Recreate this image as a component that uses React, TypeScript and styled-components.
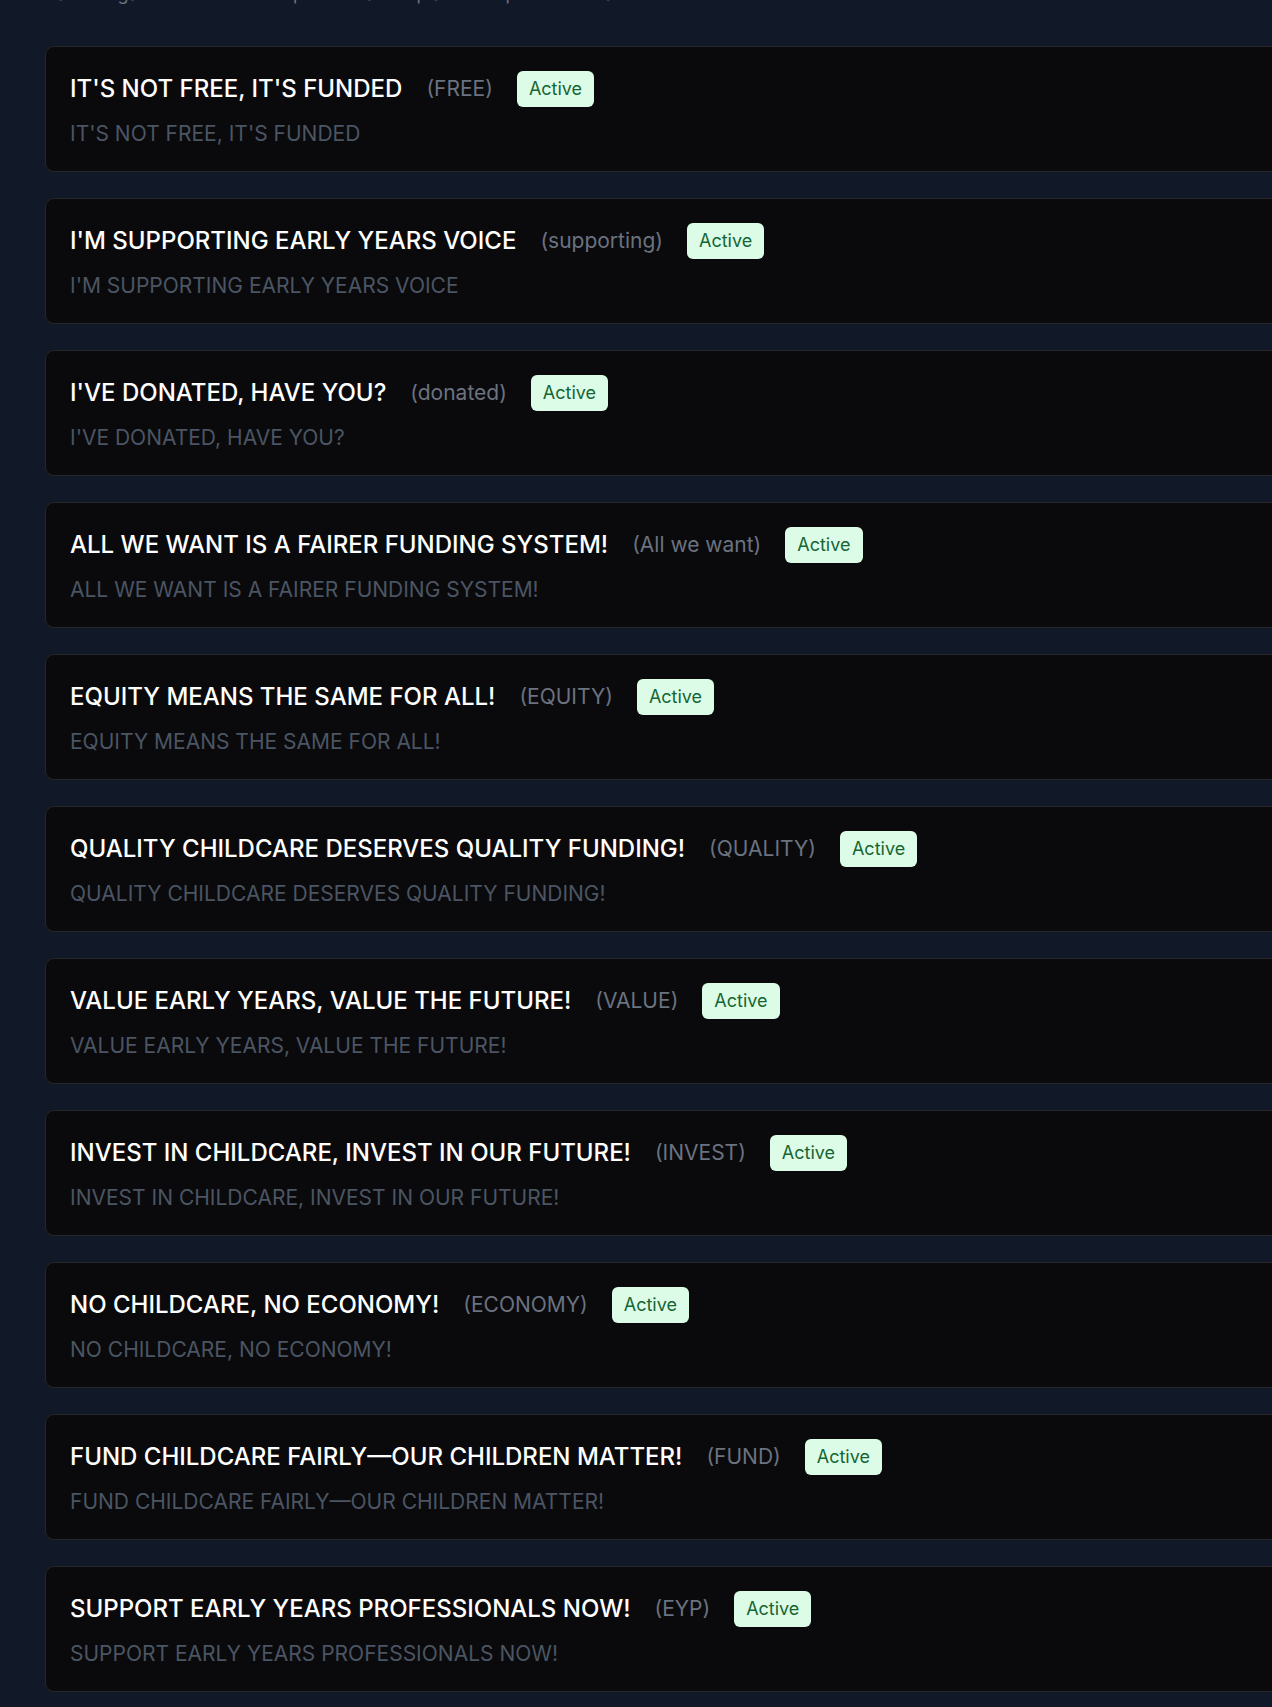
import React from "react";
import styled, { createGlobalStyle } from "styled-components";

const GlobalStyle = createGlobalStyle`
  html, body {
    margin: 0;
    padding: 0;
    background: #111827;
    overflow: hidden;
  }
  body {
    font-family: Inter, "Noto Sans", "Liberation Sans", sans-serif;
    -webkit-font-smoothing: antialiased;
  }
`;

const Page = styled.main`
  min-height: 1707px;
  background: #111827;
  padding: 0 0 40px 45px;
  box-sizing: border-box;
`;

const Intro = styled.p`
  margin: -19px 0 39px 1px;
  font-size: 18px;
  line-height: 26px;
  color: #6b7280;
  white-space: nowrap;
`;

const List = styled.ul`
  list-style: none;
  margin: 0;
  padding: 0;
  display: flex;
  flex-direction: column;
  gap: 26px;
  width: 1400px;
`;

const Card = styled.li`
  box-sizing: border-box;
  height: 126px;
  padding: 24px 24px;
  background: #0a0a0c;
  border: 1px solid #27272a;
  border-radius: 9px;
  display: flex;
  flex-direction: column;
  gap: 12px;
`;

const TitleRow = styled.div`
  display: flex;
  align-items: center;
  gap: 24px;
  height: 36px;
`;

const Title = styled.h3`
  margin: 0;
  font-size: 24px;
  line-height: 32px;
  font-weight: 500;
  color: #ffffff;
`;

const Key = styled.span`
  font-size: 21px;
  line-height: 28px;
  color: #6b7280;
`;

const Badge = styled.span`
  display: inline-flex;
  align-items: center;
  height: 36px;
  box-sizing: border-box;
  padding: 0 12px;
  border-radius: 6px;
  background: #dcfce7;
  color: #166534;
  font-size: 18px;
  line-height: 24px;
`;

const Description = styled.p`
  margin: 1px 0 0;
  font-size: 21px;
  line-height: 28px;
  color: #4b5563;
`;

type Slogan = { text: string; key: string };

const slogans: Slogan[] = [
  { text: "IT'S NOT FREE, IT'S FUNDED", key: "FREE" },
  { text: "I'M SUPPORTING EARLY YEARS VOICE", key: "supporting" },
  { text: "I'VE DONATED, HAVE YOU?", key: "donated" },
  { text: "ALL WE WANT IS A FAIRER FUNDING SYSTEM!", key: "All we want" },
  { text: "EQUITY MEANS THE SAME FOR ALL!", key: "EQUITY" },
  { text: "QUALITY CHILDCARE DESERVES QUALITY FUNDING!", key: "QUALITY" },
  { text: "VALUE EARLY YEARS, VALUE THE FUTURE!", key: "VALUE" },
  { text: "INVEST IN CHILDCARE, INVEST IN OUR FUTURE!", key: "INVEST" },
  { text: "NO CHILDCARE, NO ECONOMY!", key: "ECONOMY" },
  { text: "FUND CHILDCARE FAIRLY\u2014OUR CHILDREN MATTER!", key: "FUND" },
  { text: "SUPPORT EARLY YEARS PROFESSIONALS NOW!", key: "EYP" },
];

export default function App() {
  return (
    <>
      <GlobalStyle />
      <Page>
        <Intro>Each slogan is shown on the profile frames placed on posts once active.</Intro>
        <List>
          {slogans.map((s) => (
            <Card key={s.key}>
              <TitleRow>
                <Title>{s.text}</Title>
                <Key>({s.key})</Key>
                <Badge>Active</Badge>
              </TitleRow>
              <Description>{s.text}</Description>
            </Card>
          ))}
        </List>
      </Page>
    </>
  );
}
